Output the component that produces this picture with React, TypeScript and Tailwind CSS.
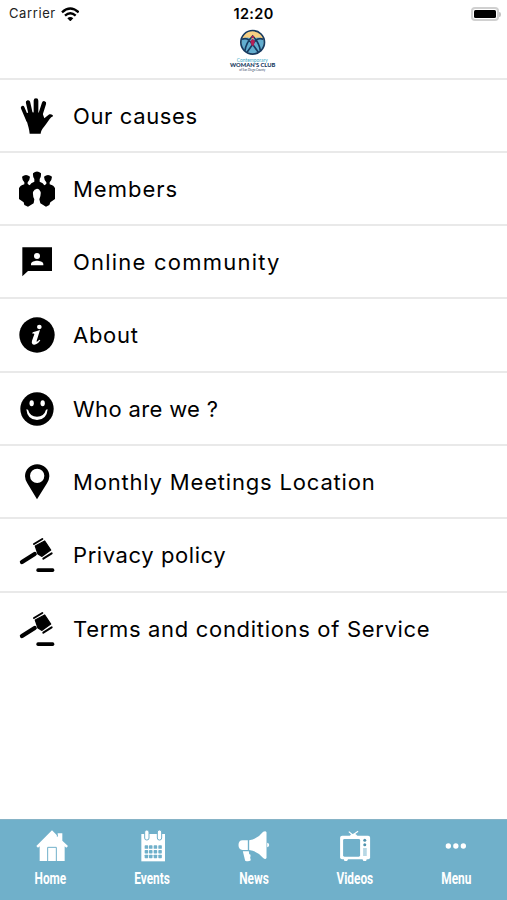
import React from "react";

const HandIcon = () => (
  <svg viewBox="54 52 114 114" className="h-[38px] w-[38px]" stroke="currentColor" strokeLinecap="round" fill="currentColor">
    <path d="M89 162 C88 148 84 138 81 126 L74 104 L86 98 L127 99 L133 116 L146 105 C152 101 161 106 159 110 C151 113 147 121 140 131 C133 142 124 148 122 162Z" stroke="none" />
    <path d="M68 84 L84 122" strokeWidth="11" fill="none" />
    <path d="M84 68 L94 112" strokeWidth="13" fill="none" />
    <path d="M108 63 L108 110" strokeWidth="14" fill="none" />
    <path d="M132 71 L119 112" strokeWidth="13" fill="none" />
  </svg>
);

const MembersIcon = () => (
  <svg viewBox="54 271 114 114" className="h-[38px] w-[38px]" fill="currentColor">
    <path d="M99 281 Q111 270 123 281 Q124 293 119 298 L119 306 Q130 309 133 317 L139 313 L139 308 Q133 303 132 291 Q144 281 156 291 Q155 303 149 308 L149 314 Q162 317 165 326 L165 358 L151 368 L148 376 L138 381 L121 371 L118 359 Q123 349 122 337 Q118 327 111 327 Q103 328 99 337 Q98 350 103 359 L101 371 L84 381 L73 376 L71 368 L57 358 L57 326 Q60 317 73 314 L73 308 Q67 303 66 291 Q78 281 90 291 Q89 303 83 308 L83 313 L89 317 Q92 309 103 306 L103 298 Q98 293 99 281Z" />
  </svg>
);

const ChatIcon = () => (
  <svg viewBox="54 56 114 114" className="h-[38px] w-[38px]">
    <path d="M67 69H156V140H84L67 156Z" fill="currentColor" />
    <circle cx="111" cy="95" r="9" fill="white" />
    <path d="M93 123V119C93 112 104 109 111 109S130 112 130 119V123Z" fill="white" />
  </svg>
);

const InfoIcon = () => (
  <svg viewBox="54 276 114 114" className="h-[38px] w-[38px]">
    <circle cx="111" cy="333" r="53" fill="currentColor" />
    <ellipse cx="118" cy="309" rx="7" ry="6.5" fill="white" />
    <path d="M98 325 Q108 322 120 318 L110 350 Q109 355 113 352 L118 347 L121 349 Q112 362 103 362 Q93 361 96 350 L103 331 Q104 328 97 329Z" fill="white" />
  </svg>
);

const SmileIcon = () => (
  <svg viewBox="54 46 114 114" className="h-[38px] w-[38px]">
    <circle cx="111" cy="103" r="50" fill="currentColor" />
    <ellipse cx="95" cy="86" rx="6.5" ry="9" fill="white" />
    <ellipse cx="128" cy="86" rx="6.5" ry="9" fill="white" />
    <path d="M79 104 Q82 136 111 136 Q140 136 143 104 L138 105 Q132 126 111 126 Q90 126 84 105Z" fill="white" />
  </svg>
);

const PinIcon = () => (
  <svg viewBox="54 266 114 114" className="h-[38px] w-[38px]" fill="currentColor">
    <path fillRule="evenodd" d="M111 375 L82 327 Q75 315 75 306 A36.5 36.5 0 0 1 148 306 Q148 315 141 327Z M111.500 283 A21.500 21.500 0 1 0 111.500 326 A21.500 21.500 0 1 0 111.500 283Z" />
  </svg>
);

const GavelIcon = () => (
  <svg viewBox="54 51 114 114" className="h-[38px] w-[38px]" stroke="currentColor" fill="currentColor">
    <path d="M66 129 L104 105" strokeWidth="13" strokeLinecap="round" />
    <path d="M106 81 L134 66 L152 93 L126 112 L114 105Z" strokeWidth="4" strokeLinejoin="round" />
    <path d="M102 75 L127 60" strokeWidth="6" strokeLinecap="round" />
    <path d="M130 119 L155 103" strokeWidth="6" strokeLinecap="round" />
    <rect x="109" y="148" width="54" height="11" rx="5" stroke="none" />
  </svg>
);

const HomeIcon = () => (
  <svg viewBox="98 53 108 108" className="h-9 w-9">
    <path d="M155 60 L172 77 V69 H186 V91 L203 107 L198 112 L193 108 V152 H118 V108 L113 112 L108 107Z" fill="white" />
    <path d="M142 152 V111 H168 V152 M171 79 V73" fill="none" stroke="#70b0ca" strokeWidth="3" />
  </svg>
);

const cells = [434, 447, 461, 475];

const EventsIcon = () => (
  <svg viewBox="402 53 108 108" className="h-9 w-9">
    <path d="M424 71H495V153H424Z" fill="white" />
    {[440, 478].map((x) => (
      <rect key={x} x={x - 6} y="59" width="13" height="30" rx="6" fill="white" stroke="#70b0ca" strokeWidth="3" />
    ))}
    {[105, 119, 133].map((y) => cells.map((x) => <rect key={`${x}-${y}`} x={x} y={y} width="10.500" height="10.500" rx="2" fill="#70b0ca" />))}
  </svg>
);

const NewsIcon = () => (
  <svg viewBox="106.5 53 108 108" className="h-9 w-9" fill="white">
    <path d="M145 90V119H129Q117 118 117 104T129 90Z" />
    <path d="M149 90 Q174 86 191 64 Q199 60 201 66 V143 Q198 149 191 143 Q174 122 149 119Z" />
    <path d="M203 97 Q209 98 209 104 T203 111Z" />
    <path d="M130 123H148L149 131Q155 132 153 138L152 142L154 150Q146 155 137 151Z" />
  </svg>
);

const VideosIcon = () => (
  <svg viewBox="410.7 53 108 108" className="h-9 w-9">
    <path d="M446 64L458 74L474 63" stroke="white" strokeWidth="3.500" fill="none" />
    <path d="M449 77Q451 70 460 70T472 77Z" fill="white" />
    <rect x="420" y="76" width="90" height="71" rx="6" fill="white" />
    <path d="M431 146H444L441 152H433ZM487 146H500L498 152H490Z" fill="white" />
    <rect x="429" y="86" width="51" height="53" rx="4" fill="#70b0ca" />
    <circle cx="494" cy="90" r="4.500" fill="#4f93ae" />
    <circle cx="494" cy="103" r="4.500" fill="#4f93ae" />
    <path d="M489 116H500M489 122H500M489 128H500M489 134H500" stroke="#70b0ca" strokeWidth="3" />
  </svg>
);

const DotsIcon = () => (
  <svg viewBox="115 53 108 108" className="h-9 w-9" fill="white">
    <circle cx="146" cy="107" r="8" />
    <circle cx="168.500" cy="107" r="8" />
    <circle cx="191" cy="107" r="8" />
  </svg>
);

const Logo = () => (
  <svg viewBox="40 85 146 135" className="h-[45px] w-[48.667px]">
    <circle cx="114" cy="128" r="35" fill="#f7cf83" />
    <path d="M81 119 Q98 108 114 119 Q130 108 147 119 Q151 145 132 157 Q114 166 96 157 Q77 145 81 119Z" fill="#62adcf" />
    <path d="M91 153 Q94 129 114 109 Q134 129 137 153 M82 119Q101 111 113 135Q126 111 146 119 M97 158L114 134L131 158" fill="none" stroke="#173a60" strokeWidth="5" />
    <path d="M114 117L121 124L117 138H111L107 124Z" fill="#b51f56" />
    <circle cx="114" cy="112" r="4" fill="#b51f56" />
    <circle cx="114" cy="128" r="35.500" fill="none" stroke="#173a60" strokeWidth="5" />
    <text x="113" y="187" textAnchor="middle" textLength="93" lengthAdjust="spacingAndGlyphs" fontFamily="Lato, sans-serif" fontSize="14" fill="#43aac8">Contemporary</text>
    <text x="114" y="202" textAnchor="middle" textLength="136" lengthAdjust="spacingAndGlyphs" fontFamily="Lato, sans-serif" fontWeight="900" fontSize="15" fill="#173a60">WOMAN'S CLUB</text>
    <text x="113" y="215" textAnchor="middle" textLength="78" lengthAdjust="spacingAndGlyphs" fontFamily="Lato, sans-serif" fontSize="10" fill="#31465f">of San Diego County</text>
  </svg>
);

const items = [
  { label: "Our causes", icon: HandIcon, tracking: "tracking-[0.63px]" },
  { label: "Members", icon: MembersIcon, tracking: "tracking-[1px]" },
  { label: "Online community", icon: ChatIcon, tracking: "tracking-[1.22px]" },
  { label: "About", icon: InfoIcon, tracking: "tracking-[0.7px]" },
  { label: "Who are we ?", icon: SmileIcon, tracking: "tracking-[0.35px]" },
  { label: "Monthly Meetings Location", icon: PinIcon, tracking: "tracking-[0.82px]" },
  { label: "Privacy policy", icon: GavelIcon, tracking: "tracking-[0.58px]" },
  { label: "Terms and conditions of Service", icon: GavelIcon, tracking: "tracking-[0.68px]" },
];

const tabs = [
  { label: "Home", icon: HomeIcon },
  { label: "Events", icon: EventsIcon },
  { label: "News", icon: NewsIcon },
  { label: "Videos", icon: VideosIcon },
  { label: "Menu", icon: DotsIcon },
];

export default function App() {
  return (
    <div className="flex h-[900px] w-[507px] flex-col overflow-hidden bg-white font-['Inter',sans-serif] text-black">
      <header className="flex h-[77.6px] shrink-0 flex-col">
        <div className="grid h-7 grid-cols-3 items-center">
          <div className="flex items-center gap-[5px] pl-[9px]">
            <span className="text-[13px] tracking-[0.6px] text-[#222]">Carrier</span>
            <svg viewBox="185 16 56 44" className="h-[14.667px] w-[18.667px]" fill="none" stroke="black" strokeWidth="7">
              <path d="M188 32Q213 9 238 32M197 42Q213 27 229 42" />
              <path d="M204 50Q213 42 222 50L213 59Z" fill="black" stroke="none" />
            </svg>
          </div>
          <span className="text-center text-[14.5px] font-semibold tracking-[0.35px]">12:20</span>
          <div className="flex items-center justify-end pr-[6px]">
            <div className="h-[14px] w-[28px] rounded-[4px] border-2 border-[#d0d0d0] p-px">
              <div className="h-full rounded-[1.5px] bg-black" />
            </div>
            <div className="h-[5px] w-[2px] rounded-r-full bg-[#c4c4c4]" />
          </div>
        </div>
        <div className="flex justify-center pr-[1.7px]">
          <Logo />
        </div>
      </header>
      <ul className="flex flex-1 flex-col">
        {items.map(({ label, icon: Icon, tracking }) => (
          <li key={label} className="flex h-[73.3px] items-center border-t-2 border-[#e9e9e9] pt-[0.6px] pl-[18px]">
            <Icon />
            <span className={`ml-[17px] whitespace-nowrap text-[22px] leading-7 ${tracking}`}>{label}</span>
          </li>
        ))}
      </ul>
      <nav className="grid h-[81px] shrink-0 grid-cols-5 border-t border-[#86b3c6] bg-[#70b0ca] text-white">
        {tabs.map(({ label, icon: Icon }) => (
          <div key={label} className="flex flex-col items-center pt-[8px]">
            <Icon />
            <span className="mt-[5px] scale-x-[0.74] font-['Roboto',sans-serif] text-base leading-5 font-bold">{label}</span>
          </div>
        ))}
      </nav>
    </div>
  );
}
